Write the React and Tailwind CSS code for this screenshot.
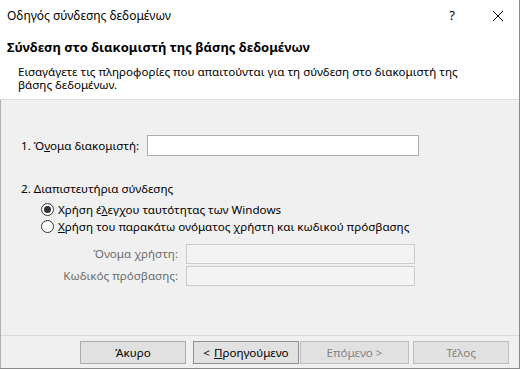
import React from "react";

const font = { fontFamily: '"Segoe UI", "Noto Sans", "Open Sans", sans-serif' };

function Radio({ checked }) {
  return (
    <span className="w-[13px] h-[13px] rounded-full border border-[#333333] bg-white flex items-center justify-center shrink-0">
      {checked && <span className="w-[7px] h-[7px] rounded-full bg-[#333333]" />}
    </span>
  );
}

function Btn({ children, disabled, focused, className = "" }) {
  return (
    <div
      className={
        "h-[23px] flex items-center justify-center text-[11.6px] border " +
        (disabled
          ? "bg-[#e1e1e1] border-[#bfbfbf] text-[#838383] "
          : focused
          ? "bg-[#e1e1e1] border-[#8f8f8f] text-black "
          : "bg-[#e1e1e1] border-[#adadad] text-black ") +
        className
      }
    >
      {children}
    </div>
  );
}

export default function App() {
  return (
    <div
      className="w-[520px] h-[369px] flex flex-col bg-[#f0f0f0] border-r border-b border-[#8a8a8a] text-black overflow-hidden"
      style={font}
    >
      {/* title bar */}
      <div className="h-[31px] bg-white flex items-center pl-[7px] shrink-0">
        <span className="text-[12px]">Οδηγός σύνδεσης δεδομένων</span>
        <span className="ml-auto text-[13px] mr-[37px]">?</span>
        <svg width="12" height="12" viewBox="0 0 12 12" className="mr-[15px]">
          <path d="M1 1 L11 11 M11 1 L1 11" stroke="#000" strokeWidth="1" />
        </svg>
      </div>
      {/* header */}
      <div className="h-[69px] bg-white border-b border-[#dcdcdc] shrink-0 pt-[8px]">
        <div className="pl-[7px] text-[13px] font-bold leading-[17px]">
          Σύνδεση στο διακομιστή της βάσης δεδομένων
        </div>
        <div className="pl-[18px] pt-[9px] text-[11.6px] leading-[13px] w-[480px]">
          Εισαγάγετε τις πληροφορίες που απαιτούνται για τη σύνδεση στο διακομιστή της
          βάσης δεδομένων.
        </div>
      </div>
      {/* body */}
      <div className="flex-1 flex flex-col border-l border-[#b0b0b0] text-[11.6px]">
        <div className="pt-[35px] pl-[20px] flex items-center">
          <span className="w-[126px]">
            1. Ό<u>ν</u>ομα διακομιστή:
          </span>
          <div className="w-[272px] h-[21px] bg-white border border-[#adadad]" />
        </div>
        <div className="pl-[20px] pt-[25px] leading-[16px]">2. Διαπιστευτήρια σύνδεσης</div>
        <div className="pl-[40px] pt-[4px] flex flex-col">
          <div className="h-[17px] flex items-center gap-[4px]">
            <Radio checked />
            <span>
              Χρήση έ<u>λ</u>εγχου ταυτότητας των Windows
            </span>
          </div>
          <div className="h-[17px] flex items-center gap-[4px]">
            <Radio />
            <span>
              <u>Χ</u>ρήση του παρακάτω ονόματος χρήστη και κωδικού πρόσβασης
            </span>
          </div>
        </div>
        <div className="pt-[9px] flex flex-col gap-[2px] text-[#6d6d6d]">
          <div className="flex items-center">
            <span className="w-[177px] text-right">Όνομα χρήστη:</span>
            <div className="ml-[8px] w-[229px] h-[20px] bg-[#f3f3f3] border border-[#cccccc]" />
          </div>
          <div className="flex items-center">
            <span className="w-[177px] text-right">Κωδικός πρόσβασης:</span>
            <div className="ml-[8px] w-[229px] h-[20px] bg-[#f3f3f3] border border-[#cccccc]" />
          </div>
        </div>
        <div className="mt-auto border-t border-[#d9d9d9] h-[33px] flex items-start pt-[5px]">
          <Btn className="ml-[79px] w-[106px]">Άκυρο</Btn>
          <Btn focused className="ml-[7px] w-[106px]">
            &lt; <u className="ml-[4px]">Π</u>ροηγούμενο
          </Btn>
          <Btn disabled className="ml-[1px] w-[109px]">Επόμενο &gt;</Btn>
          <Btn disabled className="ml-[4px] w-[96px]">Τέλος</Btn>
        </div>
      </div>
    </div>
  );
}
